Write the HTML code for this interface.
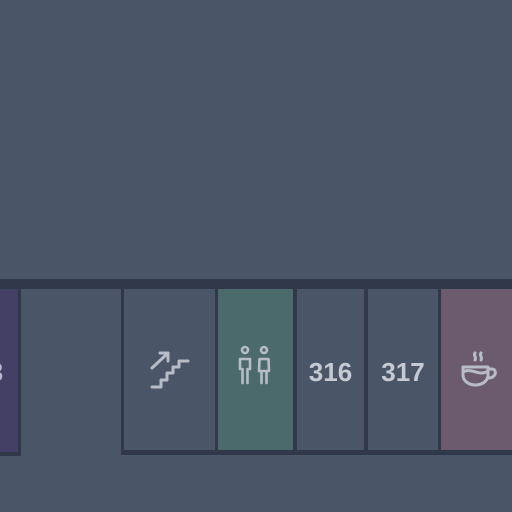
<!DOCTYPE html>
<html><head><style>
body{margin:0;width:512px;height:512px;background:#4a5568;position:relative;overflow:hidden;font-family:"Liberation Sans",sans-serif}
div{position:absolute}
.d{background:#303849}
.t{color:#c5c9d1;font-size:26px;font-weight:bold;text-align:center;top:357px}
svg{position:absolute}
</style></head><body>
<div class="d" style="left:0;top:279px;width:512px;height:10px"></div>
<div style="left:0;top:289px;width:18px;height:163px;background:#433f65"></div>
<div class="d" style="left:18px;top:289px;width:3px;height:167px"></div>
<div class="d" style="left:0;top:452px;width:20px;height:4px"></div>
<div class="t" style="left:-14px;width:20px;color:#b9b8cc">3</div>
<div class="d" style="left:121px;top:289px;width:3px;height:166px"></div>
<div class="d" style="left:122px;top:450px;width:390px;height:5px"></div>
<div class="d" style="left:215px;top:289px;width:3px;height:162px"></div>
<div style="left:218px;top:289px;width:75px;height:161px;background:#4a6a6c"></div>
<div class="d" style="left:293px;top:289px;width:4px;height:162px"></div>
<div class="d" style="left:364px;top:289px;width:4px;height:162px"></div>
<div class="d" style="left:438px;top:289px;width:3px;height:162px"></div>
<div style="left:441px;top:289px;width:71px;height:161px;background:#6c5b6e"></div>
<div class="t" style="left:297px;width:67px">316</div>
<div class="t" style="left:368px;width:70px">317</div>
<svg width="60" height="60" style="left:140px;top:340px" viewBox="140 340 60 60" fill="none" stroke="#b8bcc6" stroke-width="3" stroke-linecap="round" stroke-linejoin="round">
<path d="M152 387H161V380H167V373H173V367H179V361H188"/><path d="M152 368L167 354M160 353H168V361"/></svg>
<svg width="60" height="60" style="left:225px;top:340px" viewBox="225 340 60 60" fill="none" stroke="#b8bcc6" stroke-width="2.6" stroke-linecap="round" stroke-linejoin="round">
<circle cx="245" cy="350" r="3"/><path d="M240 369V359H250V369M242.5 369V383M247.5 369V383"/>
<circle cx="264" cy="350" r="3"/><path d="M259 371L259.5 359H268.5L269 371ZM261.5 371V383M266.5 371V383"/></svg>
<svg width="60" height="60" style="left:450px;top:340px" viewBox="450 340 60 60" fill="none" stroke="#b8bcc6" stroke-width="3" stroke-linecap="round" stroke-linejoin="round">
<path d="M475 353C473 356 477 357 475 360M481 353C479 356 483 357 481 360"/><path d="M463 367H488V375C488 381 482 385 475.5 385C469 385 463 381 463 375Z"/><path d="M463 372C472 367 479 377 488 371"/><path d="M488 369H492C497 369 497 378 488 378"/></svg>
</body></html>
